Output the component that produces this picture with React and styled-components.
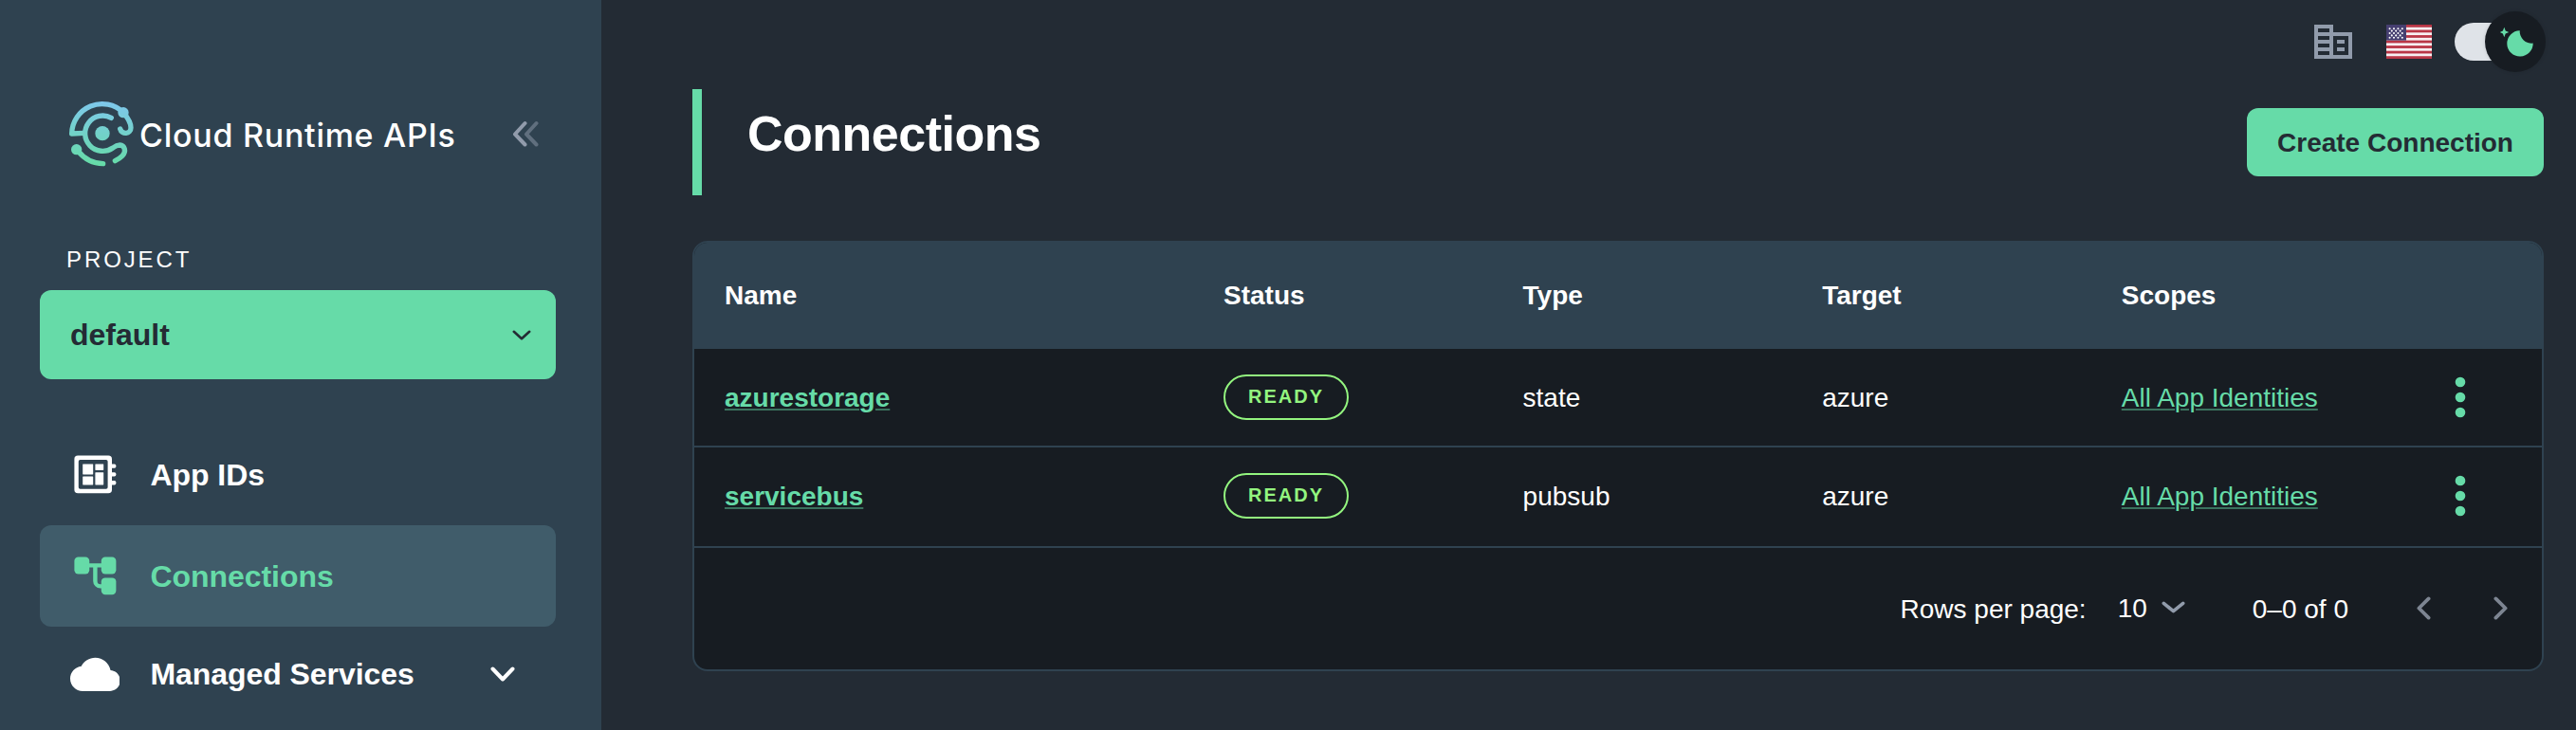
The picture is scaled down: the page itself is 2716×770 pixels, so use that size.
import React from "react";
import styled, { createGlobalStyle, ThemeProvider } from "styled-components";

const theme = {
  page: "#232b34",
  sidebar: "#2f4250",
  active: "#405c6a",
  panel: "#171c22",
  green: "#66dba8",
  lime: "#93f57f",
  muted: "#919bab",
  text: "#ffffff",
};

const GlobalStyle = createGlobalStyle`
  * { box-sizing: border-box; }
  body {
    margin: 0;
    background: ${theme.page};
    color: #fff;
    font-family: "Liberation Sans", Arial, sans-serif;
    overflow: hidden;
  }
`;

const Page = styled.div`
  display: flex;
  width: 2716px;
  height: 770px;
`;

const Sidebar = styled.aside`
  display: flex;
  flex-direction: column;
  flex: none;
  width: 634px;
  padding: 94px 48px 0 42px;
  background: ${(p) => p.theme.sidebar};
`;

const Brand = styled.div`
  display: flex;
  align-items: center;
  height: 94px;
  padding: 0 18px 0 30px;
  svg { flex: none; }
`;

const BrandName = styled.span`
  flex: 1;
  margin-left: 3px;
  padding-top: 3px;
  font-family: Inter, sans-serif;
  font-size: 34px;
  font-weight: 500;
  line-height: 44px;
  letter-spacing: 0.73px;
  white-space: nowrap;
`;

const Label = styled.div`
  margin: 72px 0 18px 28px;
  font-size: 24px;
  line-height: 28px;
  letter-spacing: 2.9px;
`;

const ProjectSelect = styled.button`
  display: flex;
  align-items: center;
  justify-content: space-between;
  height: 94px;
  padding: 0 26px 0 32px;
  border: 0;
  border-radius: 12px;
  background: ${(p) => p.theme.green};
  color: #242b34;
  font: bold 32px "Liberation Sans", Arial, sans-serif;
`;

const Nav = styled.nav`
  display: flex;
  flex-direction: column;
  margin-top: 47px;
`;

const NavItem = styled.a`
  display: flex;
  align-items: center;
  height: ${(p) => p.$height || 107}px;
  padding: 0 43px 0 31.6px;
  border-radius: 12px;
  background: ${(p) => (p.$active ? p.theme.active : "transparent")};
  color: ${(p) => (p.$active ? p.theme.green : p.theme.text)};
  font-size: 32px;
  font-weight: bold;
  svg { flex: none; }
  span { flex: 1; margin-left: 32px; padding-top: 1px; letter-spacing: -0.05px; }
`;

const Main = styled.main`
  display: flex;
  flex-direction: column;
  flex: 1;
  padding: 0 34px 0 96px;
`;

const TopBar = styled.div`
  display: flex;
  align-items: center;
  justify-content: flex-end;
  height: 88px;
  margin-right: -2px;
`;

const FlagSvg = styled.svg`
  margin: 0 24px 0 32px;
`;

const Toggle = styled.div`
  position: relative;
  width: 96px;
  height: 40px;
`;

const Track = styled.div`
  width: 80px;
  height: 40px;
  border-radius: 20px;
  background: #dfe3e8;
`;

const Thumb = styled.div`
  position: absolute;
  right: 0;
  top: -12px;
  width: 64px;
  height: 64px;
  border-radius: 50%;
  background: ${(p) => p.theme.panel};
  box-shadow: 0 0 4px rgba(0, 0, 0, 0.12);
`;

const Heading = styled.header`
  display: flex;
  justify-content: space-between;
  height: 112px;
  margin-top: 6px;
  border-left: 10px solid ${(p) => p.theme.green};
`;

const Title = styled.h1`
  margin: 17px 0 0 48px;
  font-size: 52px;
  line-height: 60px;
  letter-spacing: -0.5px;
`;

const CreateButton = styled.button`
  width: 313px;
  height: 72px;
  margin-top: 20px;
  padding: 2px 0 0;
  border: 0;
  border-radius: 12px;
  background: ${(p) => p.theme.green};
  color: #242b34;
  font: bold 28px "Liberation Sans", Arial, sans-serif;
`;

const TableCard = styled.section`
  height: 454px;
  margin-top: 48px;
  border: 2px solid ${(p) => p.theme.sidebar};
  border-radius: 16px;
  background: ${(p) => p.theme.panel};
  overflow: hidden;
  font-size: 28px;
`;

const Row = styled.div`
  display: grid;
  grid-template-columns: 526px 315.6px 315.6px 315.6px 1fr 54px;
  align-items: center;
  height: 104px;
  padding: 0 64px 0 32px;
  border-bottom: 2px solid ${(p) => (p.$last ? "transparent" : p.theme.sidebar)};
`;

const HeadRow = styled(Row)`
  height: 112px;
  padding-top: 2px;
  background: ${(p) => p.theme.sidebar};
  font-weight: bold;
`;

const TextCell = styled.div`
  padding-top: 2px;
`;

const Link = styled.a`
  color: ${(p) => p.theme.green};
  font-weight: ${(p) => (p.$bold ? "bold" : "normal")};
  text-decoration: underline rgba(102, 219, 168, 0.45);
  text-decoration-thickness: 2px;
  text-underline-offset: 2px;
`;

const Badge = styled.div`
  display: flex;
  align-items: center;
  justify-content: center;
  width: 132px;
  height: 48px;
  padding: 0 0 2px 0;
  border: 2px solid ${(p) => p.theme.lime};
  border-radius: 24px;
  color: ${(p) => p.theme.lime};
  font-size: 20px;
  font-weight: bold;
  letter-spacing: 2px;
`;

const Kebab = styled.svg`
  display: block;
  fill: ${(p) => p.theme.green};
`;

const Pagination = styled.footer`
  display: flex;
  align-items: center;
  justify-content: flex-end;
  height: 130px;
  padding-right: 36px;
  border-top: 2px solid ${(p) => p.theme.sidebar};
`;

const PageText = styled.span`
  padding-top: 2px;
`;

const PageSize = styled.div`
  display: flex;
  align-items: center;
  gap: 15px;
  margin: 0 71px 0 33px;
  svg { margin-bottom: 4px; }
`;

const PageArrows = styled.div`
  display: flex;
  gap: 66px;
  margin-left: 72px;
  padding-bottom: 2px;
`;

function Chevron({ w, h, stroke = 3, color = "currentColor", dir = "down" }) {
  const s = stroke / 2 + 0.5;
  const d = {
    down: `M${s} ${s}L${w / 2} ${h - s}L${w - s} ${s}`,
    left: `M${w - s} ${s}L${s} ${h / 2}L${w - s} ${h - s}`,
    right: `M${s} ${s}L${w - s} ${h / 2}L${s} ${h - s}`,
  }[dir];
  return (
    <svg width={w} height={h} fill="none" stroke={color} strokeWidth={stroke} strokeLinecap="round" strokeLinejoin="round">
      <path d={d} />
    </svg>
  );
}

function Logo() {
  return (
    <svg width="72" height="72" viewBox="36 44 216 216" fill="none">
      <defs>
        <linearGradient id="brand" gradientUnits="userSpaceOnUse" x1="150" y1="50" x2="140" y2="250">
          <stop offset="0" stopColor="#7fc8ec" />
          <stop offset="1" stopColor="#66dba8" />
        </linearGradient>
      </defs>
      <g stroke="url(#brand)" strokeWidth="16" strokeLinecap="round" strokeLinejoin="round">
        <path d="M210 85A96 96 0 0 0 47 152L86 150" />
        <path d="M211 86C226 104 234 118 234 133C234 154 205 156 200 137" />
        <path d="M172 102A56 56 0 1 0 177 197C186 190 191 188 199 188C214 189 221 208 207 222C200 229 192 234 184 238" />
        <path d="M66 206Q98 246 146 247" />
      </g>
      <g fill="url(#brand)">
        <circle cx="144" cy="151" r="23" />
        <circle cx="210" cy="85" r="17" />
        <circle cx="62" cy="202" r="17" />
      </g>
    </svg>
  );
}

function BoardIcon() {
  return (
    <svg width="52.8" height="52.8" viewBox="0 0 24 24" fill="currentColor">
      <path
        fillRule="evenodd"
        d="M3.7 3H18.3A1.7 1.7 0 0 1 20 4.7V7H21.2A.8.8 0 0 1 22 7.8V8.2A.8.8 0 0 1 21.2 9H20V11H21.2A.8.8 0 0 1 22 11.8V12.2A.8.8 0 0 1 21.2 13H20V15H21.2A.8.8 0 0 1 22 15.8V16.2A.8.8 0 0 1 21.2 17H20V19.3A1.7 1.7 0 0 1 18.3 21H3.7A1.7 1.7 0 0 1 2 19.3V4.7A1.7 1.7 0 0 1 3.7 3ZM4.8 5A.8.8 0 0 0 4 5.8V18.2A.8.8 0 0 0 4.8 19H17.2A.8.8 0 0 0 18 18.2V5.8A.8.8 0 0 0 17.2 5Z"
      />
      <rect x="6" y="7" width="5" height="5" rx=".2" />
      <rect x="12" y="7" width="4" height="3" rx=".2" />
      <rect x="6" y="13" width="5" height="4" rx=".2" />
      <rect x="12" y="11" width="4" height="6" rx=".2" />
    </svg>
  );
}

function TreeIcon() {
  return (
    <svg width="52.8" height="52.8" viewBox="0 0 24 24" fill="currentColor">
      <rect x="2" y="3" width="7.2" height="8.1" rx="1.9" />
      <rect x="14.9" y="3" width="7.1" height="8.1" rx="1.9" />
      <rect x="14.9" y="12.9" width="7.1" height="8.1" rx="1.9" />
      <path d="M8 7H16M12 7V14.5A2.5 2.5 0 0 0 14.5 17H16" fill="none" stroke="currentColor" strokeWidth="2" />
    </svg>
  );
}

function CloudIcon() {
  return (
    <svg width="52.8" height="52.8" viewBox="0 0 24 24" fill="currentColor">
      <path d="M19.35 10.04C18.67 6.59 15.64 4 12 4 9.11 4 6.6 5.64 5.35 8.04 2.34 8.36 0 10.91 0 14c0 3.31 2.69 6 6 6h13c2.76 0 5-2.24 5-5 0-2.64-2.05-4.78-4.65-4.96z" />
    </svg>
  );
}

function OfficeIcon() {
  return (
    <svg width="48" height="48" viewBox="0 0 24 24" fill={theme.muted}>
      <path d="M12 7V3H2v18h20V7H12zM10 19H4v-2h6v2zm0-4H4v-2h6v2zm0-4H4V9h6v2zm0-4H4V5h6v2zm10 12h-8V9h8v10zm-2-8h-4v2h4v-2zm0 4h-4v2h4v-2z" />
    </svg>
  );
}

function Flag() {
  const stripe = 36 / 13;
  const stars = [];
  for (let r = 0; r < 5; r++) {
    const n = r % 2 ? 3 : 4;
    for (let c = 0; c < n; c++) stars.push([3.6 + c * 4.4 + (r % 2 ? 2.2 : 0), 4.2 + r * 2.4]);
  }
  return (
    <FlagSvg width="48" height="36" viewBox="0 0 48 36">
      <rect width="48" height="36" fill="#f7eff2" />
      {[0, 2, 4, 6, 8, 10, 12].map((i) => (
        <rect key={i} y={i * stripe} width="48" height={stripe} fill="#b93646" />
      ))}
      <rect width="21" height={stripe * 6} fill="#463f70" />
      {stars.map(([x, y], i) => (
        <circle key={i} cx={x} cy={y} r="1.05" fill="#fff" />
      ))}
    </FlagSvg>
  );
}

function ThemeToggle() {
  return (
    <Toggle>
      <Track />
      <Thumb>
        <svg width="64" height="64" fill={theme.green}>
          <path d="M36.7 20.2A13.7 13.7 0 1 0 50.7 33.6A12.6 12.6 0 0 1 36.7 20.2Z" />
          <path d="M20.3 16.8L21.7 20.6L25.2 22L21.7 23.4L20.3 27.2L18.9 23.4L15.8 22L18.9 20.6Z" />
        </svg>
      </Thumb>
    </Toggle>
  );
}

const connections = [
  { name: "azurestorage", type: "state", target: "azure" },
  { name: "servicebus", type: "pubsub", target: "azure" },
];

export default function App() {
  return (
    <ThemeProvider theme={theme}>
      <GlobalStyle />
      <Page>
        <Sidebar>
          <Brand>
            <Logo />
            <BrandName>Cloud Runtime APIs</BrandName>
            <svg width="28" height="28" fill="none" stroke={theme.muted} strokeWidth="4" strokeLinecap="round" strokeLinejoin="round">
              <path d="M13.5 3L3 14.5L13.5 25.5" />
              <path d="M25.5 3L15 14.5L25.5 25.5" opacity=".5" />
            </svg>
          </Brand>
          <Label>PROJECT</Label>
          <ProjectSelect>
            default
            <Chevron w={20} h={11} stroke={2.6} />
          </ProjectSelect>
          <Nav>
            <NavItem>
              <BoardIcon />
              <span>App IDs</span>
            </NavItem>
            <NavItem $active>
              <TreeIcon />
              <span>Connections</span>
            </NavItem>
            <NavItem $height={100}>
              <CloudIcon />
              <span>Managed Services</span>
              <Chevron w={26} h={16} stroke={4} />
            </NavItem>
          </Nav>
        </Sidebar>
        <Main>
          <TopBar>
            <OfficeIcon />
            <Flag />
            <ThemeToggle />
          </TopBar>
          <Heading>
            <Title>Connections</Title>
            <CreateButton>Create Connection</CreateButton>
          </Heading>
          <TableCard>
            <HeadRow>
              <div>Name</div>
              <div>Status</div>
              <div>Type</div>
              <div>Target</div>
              <div>Scopes</div>
            </HeadRow>
            {connections.map((c, i) => (
              <Row key={c.name} $last={i === connections.length - 1}>
                <TextCell><Link $bold>{c.name}</Link></TextCell>
                <div><Badge>READY</Badge></div>
                <TextCell>{c.type}</TextCell>
                <TextCell>{c.target}</TextCell>
                <TextCell><Link>All App Identities</Link></TextCell>
                <Kebab width="64" height="64" viewBox="0 0 24 24">
                  <circle cx="12" cy="6" r="2" />
                  <circle cx="12" cy="12" r="2" />
                  <circle cx="12" cy="18" r="2" />
                </Kebab>
              </Row>
            ))}
            <Pagination>
              <PageText>Rows per page:</PageText>
              <PageSize>
                10
                <Chevron w={25} h={13} stroke={3.6} color={theme.muted} />
              </PageSize>
              <PageText>0–0 of 0</PageText>
              <PageArrows>
                <Chevron w={15} h={25} stroke={3.8} color="#7d8592" dir="left" />
                <Chevron w={15} h={25} stroke={3.8} color="#7d8592" dir="right" />
              </PageArrows>
            </Pagination>
          </TableCard>
        </Main>
      </Page>
    </ThemeProvider>
  );
}
